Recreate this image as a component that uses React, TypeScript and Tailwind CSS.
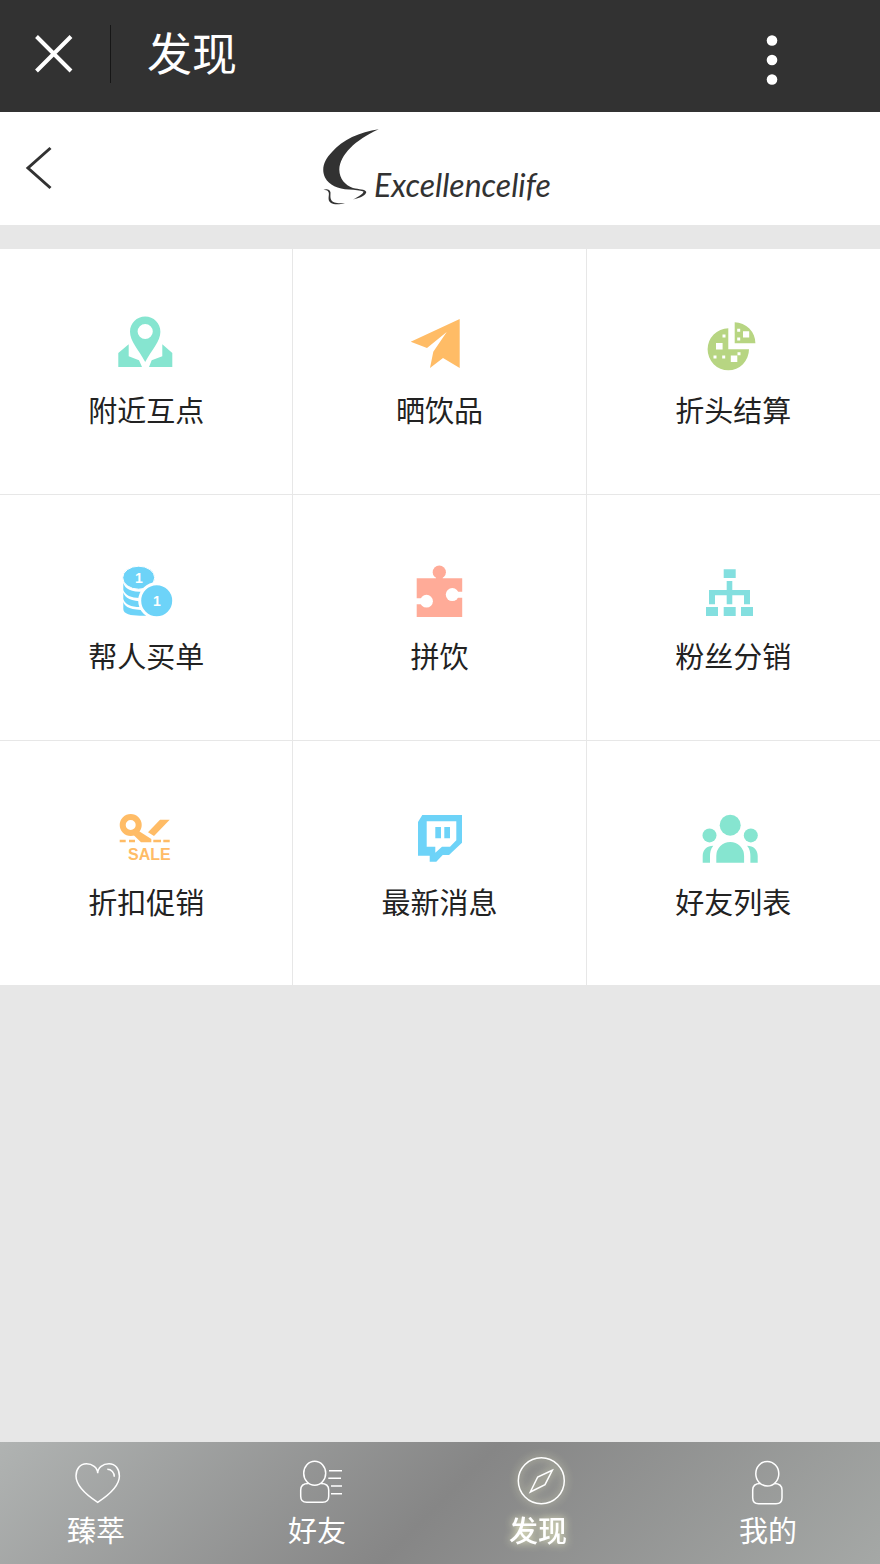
import type { ReactNode } from "react";

interface Entry {
  id: string;
  label: string;
  color: string;
  icon: ReactNode;
}

const entries: Entry[] = [
  {
    id: "nearby",
    label: "附近互点",
    color: "text-[#86e5d0]",
    icon: (
      <>
        <path
          fillRule="evenodd"
          d="M31.200 5.500C22.700 5.500 16 12.200 16 20.700C16 30 24.500 38.500 31.200 51C38 38.500 46.400 30 46.400 20.700C46.400 12.200 39.700 5.500 31.200 5.500ZM31.200 12.900a7.600 7.600 0 1 1 0 15.200a7.600 7.600 0 0 1 0-15.200Z"
        />
        <path d="M4.300 42 14.700 33.300V45.300L25 49.300 28 56H4.300ZM35 56 37.700 49.300 48.300 45.300V33.300L58.300 42V56Z" />
      </>
    ),
  },
  {
    id: "share",
    label: "晒饮品",
    color: "text-[#ffbc66]",
    icon: (
      <path d="M52.700 8 3.700 30.700 20 37 39.700 21 26.300 40.700 23 57 36 47 52.700 57Z" />
    ),
  },
  {
    id: "discount",
    label: "折头结算",
    color: "text-[#b7d582]",
    icon: (
      <>
        <path d="M27.300 17.300V38.300H48A20.700 21 0 1 1 27.300 17.300ZM33.700 11.300V32.300H54.400A20.700 21 0 0 0 33.700 11.300Z" />
        <g fill="#fff">
          <path d="M21.500 23.500h3v3h-3zM15 32h6.600v6.600H15zM12.500 44.500h3v3h-3zM21.200 44.500h3v3h-3zM29.800 44.500h6.500V51h-6.500zM36.500 41.200h3v3h-3z" />
          <path d="M36.200 17.800h3v3h-3zM42 20.300h6.200v6.200H42zM36.200 26.500h3v3h-3z" />
        </g>
      </>
    ),
  },
  {
    id: "treat",
    label: "帮人买单",
    color: "text-[#6dd3f8]",
    icon: (
      <>
        <path d="M9.300 26C11 32 17 35 30 35V41H26C17 41 11 38 9.300 33Z" />
        <path d="M9.300 35.500C11 41.300 17 44.300 30 44.300V50H26C17 50 11 47.500 9.300 42Z" />
        <path d="M9.300 45C11 50.500 17 53 32 53V58.700H26C17 58.700 9.300 57 9.300 52Z" />
        <ellipse cx="24.700" cy="20.700" rx="16" ry="11.500" stroke="#fff" strokeWidth="1" />
        <circle cx="42.700" cy="43.700" r="17" stroke="#fff" strokeWidth="3" />
        <g
          fill="#fff"
          textAnchor="middle"
          className="font-['Liberation_Sans',sans-serif] text-[14px] font-bold"
        >
          <text x="25" y="26">1</text>
          <text x="43" y="49">1</text>
        </g>
      </>
    ),
  },
  {
    id: "group",
    label: "拼饮",
    color: "text-[#ffab98]",
    icon: (
      <>
        <path d="M9.700 21.300H55.200V60H9.700Z" />
        <circle cx="32.300" cy="15.200" r="6.600" />
        <path d="M29 19h6.600v3H29z" />
        <g fill="#fff">
          <circle cx="19.500" cy="44.200" r="6.400" />
          <path d="M9 41.200h7v6H9zM49 34.700h7v6h-7z" />
          <circle cx="45.300" cy="37.600" r="6.500" />
        </g>
      </>
    ),
  },
  {
    id: "fans",
    label: "粉丝分销",
    color: "text-[#83dfdf]",
    icon: (
      <path d="M22.700 12.300h12V21h-12zM25.700 24h5.600v9H49v14.300h-6v-9H31.300v9h-5.600v-9H14v9H8V33h17.700zM5 50h12v9H5zM22.700 50h12v9h-12zM40 50h12v9H40z" />
    ),
  },
  {
    id: "sale",
    label: "折扣促销",
    color: "text-[#ffbc66]",
    icon: (
      <>
        <circle cx="16.700" cy="22" r="8" fill="none" stroke="currentColor" strokeWidth="6" />
        <path d="M24 27.500 37.300 36V39.300H27L19 31.500ZM46 16.700H55.700L40 33 34 29.300Z" />
        <path d="M5.700 36.700h6v2.600h-6zM15 36.700h6v2.600h-6zM39.300 36.700H47v2.600h-7.700zM49.300 36.700h6.400v2.600h-6.400z" />
        <text
          x="14"
          y="57"
          className="font-['Liberation_Sans',sans-serif] text-[16px] font-bold"
        >
          SALE
        </text>
      </>
    ),
  },
  {
    id: "news",
    label: "最新消息",
    color: "text-[#6dd3f8]",
    icon: (
      <>
        <path
          fillRule="evenodd"
          d="M15.300 12H55V39.700L42 52H35.700L29.300 58.700H22.700V52.700H11V19ZM19.700 18.300V43.700H28.300V49.700L35 43.700H43L49.300 37.300V18.300Z"
        />
        <path d="M28.300 24H34V35.300H28.300zM37.300 24H43V35.300H37.300z" />
      </>
    ),
  },
  {
    id: "friends",
    label: "好友列表",
    color: "text-[#86e5d0]",
    icon: (
      <>
        <circle cx="29.200" cy="22.200" r="10.500" />
        <circle cx="8.500" cy="32.400" r="7" />
        <circle cx="49.800" cy="32.400" r="7" />
        <path d="M15.300 59.700V53a13.900 14 0 0 1 27.800 0V59.700ZM1.700 59.700V53C1.700 46.500 6 42.700 12.300 42.700C9.500 46 9 50 9 53V59.700ZM56.700 59.700V53C56.700 46.500 52.400 42.700 46.100 42.700C48.900 46 49.400 50 49.400 53V59.700Z" />
      </>
    ),
  },
];

const tabs = [
  {
    id: "best",
    label: "臻萃",
    icon: (
      <>
        <path d="M25.700 16.300C25.700 10.500 20 6.700 14.500 6.700C8 6.700 4 12 4 19C4 30 16 39 25.700 45.300C35.400 39 47.400 30 47.400 19C47.400 12 43.500 6.700 37 6.700C31 6.700 25.700 10.500 25.700 16.300Z" />
        <path d="M35.300 12.300C39.500 12.300 42.300 15.500 42.300 19.700" />
      </>
    ),
  },
  {
    id: "mates",
    label: "好友",
    icon: (
      <>
        <ellipse cx="21.700" cy="16.300" rx="11" ry="12" />
        <path d="M15.300 26.500C10 26.500 7.700 28.500 7.700 33V39.300Q7.700 45.300 13.700 45.300H29.700Q35.700 45.300 35.700 39.300V33C35.700 28.500 33 26.500 28 26.500" />
        <path d="M36 13.700H49M35.300 21.300H48M38 29H49M38 36.700H49" />
      </>
    ),
  },
  {
    id: "discover",
    label: "发现",
    active: true,
    icon: (
      <>
        <circle cx="27.300" cy="23.700" r="23" />
        <path d="M38.300 13.300 23.700 20 16.300 35 31 27.700Z" />
      </>
    ),
  },
  {
    id: "mine",
    label: "我的",
    icon: (
      <>
        <ellipse cx="23.300" cy="16.700" rx="11.500" ry="12.300" />
        <path d="M16.500 26.500C11 26.500 8.700 29 8.700 33V40.700Q8.700 46.700 14.700 46.700H32Q38 46.700 38 40.700V33C38 29 35.500 26.500 30 26.500" />
      </>
    ),
  },
];

function Logo() {
  return (
    <svg
      width="236"
      height="92"
      viewBox="0 0 236 92"
      fill="#323232"
      role="img"
      aria-label="Excellencelife"
    >
      <path d="M56.700 6.300C38 9 20 17 10 29C2 37 -1 46 3 54.500C7 62 16 66 27 66.500C33 67 38 67 41.500 68.500C41 71 37 73.500 31 76.500C39 75 44 72 44.300 69C43 66 37 66.500 31 65C23 62 17.500 56 17.300 46.500C18 32 33 17 56.700 6.300Z" />
      <path d="M1.500 67C4 65.500 8 66 8.500 69.500C8.500 73.500 7.500 77.500 12.500 79.500C15 80.500 19 80 23 80.200C18 81.500 12 82 9 80C4.500 77 8 72 6.500 69C5.500 67 3.500 67 1.500 67Z" />
      <text
        x="52"
        y="74"
        className="font-['Lato','Liberation_Sans',sans-serif] text-[32px] italic"
      >
        Excellencelife
      </text>
    </svg>
  );
}

export default function App() {
  return (
    <div className="flex min-h-screen flex-col bg-[#e7e7e7] font-['Noto_Sans_CJK_SC',sans-serif] text-[#222]">
      <header className="flex h-28 items-center bg-[#323232] pb-1 text-white">
        <button type="button" aria-label="关闭" className="flex h-14 w-[110px] items-center pl-8">
          <svg width="44" height="44" viewBox="0 0 44 44" stroke="currentColor" strokeWidth="4">
            <path d="M4.500 4.500 39 39M39 4.500 4.500 39" />
          </svg>
        </button>
        <div className="h-[58px] w-px bg-[#161616]" />
        <h1 className="pb-1 pl-9 text-[45px] leading-[64px]">发现</h1>
        <button type="button" aria-label="更多" className="mt-3 mr-[98px] ml-auto">
          <svg width="20" height="56" viewBox="0 0 20 56" fill="currentColor">
            <circle cx="10" cy="8.500" r="5.300" />
            <circle cx="10" cy="28" r="5.300" />
            <circle cx="10" cy="47.500" r="5.300" />
          </svg>
        </button>
      </header>

      <div className="grid h-[113px] grid-cols-[1fr_auto_1fr] items-center bg-white">
        <button type="button" aria-label="返回" className="w-16 pl-5">
          <svg width="40" height="48" viewBox="0 0 40 48" fill="none" stroke="#323232" strokeWidth="3">
            <path d="M30.500 3 8 23 30.500 43" />
          </svg>
        </button>
        <Logo />
      </div>

      <main className="mt-6 grid grid-cols-3 bg-white">
        {entries.map((entry) => (
          <a
            key={entry.id}
            href={`#${entry.id}`}
            className="flex h-[246px] flex-col items-center border-r border-b border-[#e7e7e7] pt-[62px] nth-[3n]:border-r-0 nth-[n+7]:h-[244px] nth-[n+7]:border-b-0"
          >
            <svg
              width="64"
              height="64"
              viewBox="0 0 64 64"
              fill="currentColor"
              className={entry.color}
              aria-hidden="true"
            >
              {entry.icon}
            </svg>
            <span className="mt-3 text-[29px] leading-[44px]">{entry.label}</span>
          </a>
        ))}
      </main>

      <nav className="mt-auto grid grid-cols-[221fr_221fr_230fr_60px] bg-[linear-gradient(135deg,#b0b3b2_0%,#868686_50%,#a5a8a6_100%)] pt-[15px] pr-[82px] pb-[13px] pl-[66px] text-white">
        {tabs.map((tab) => (
          <a
            key={tab.id}
            href={`#${tab.id}`}
            aria-current={tab.active ? "page" : undefined}
            className={
              tab.active
                ? "flex w-[60px] flex-col items-center font-medium drop-shadow-[0_0_4px_#f4f6c8]"
                : "flex w-[60px] flex-col items-center"
            }
          >
            <svg
              width="48"
              height="48"
              viewBox="0 0 48 48"
              fill="none"
              stroke="currentColor"
              strokeWidth="1.500"
              className="overflow-visible"
              aria-hidden="true"
            >
              {tab.icon}
            </svg>
            <span className="mt-0.5 text-[29px] leading-[44px]">{tab.label}</span>
          </a>
        ))}
      </nav>
    </div>
  );
}
